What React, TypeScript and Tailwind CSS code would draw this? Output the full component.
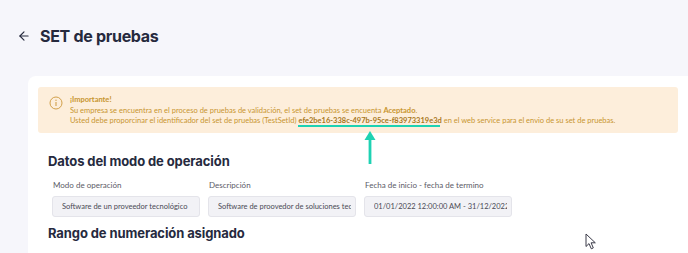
import { ArrowLeft } from "lucide-react";

const heading = "font-['Inter',sans-serif]";
const body = "font-['Lato',sans-serif]";

function Field({ label, value }: { label: string; value: string }) {
  return (
    <label className="flex flex-col gap-[6px] w-[148px]">
      <span className={`${body} text-[8px] leading-[10px] text-[#5b5b66] pl-px`}>{label}</span>
      <input
        readOnly
        value={value}
        className={`${body} h-[21px] w-full pl-[9px] pr-[4px] bg-[#f2f2f6] border border-[#e4e4ea] rounded-[3px] text-[7.5px] text-[#4a4a55] outline-none`}
      />
    </label>
  );
}

export default function App() {
  return (
    <div className="relative w-[688px] h-[253px] overflow-hidden bg-[#f6f6fb]">
      {/* header */}
      <div className="flex items-start gap-[9px] pl-[17px] pt-[26px] h-[76px]">
        <ArrowLeft size={14} strokeWidth={2} className="text-[#262a3e] mt-[3px]" />
        <h1 className={`${heading} text-[16px] leading-[20px] font-bold tracking-[-0.3px] text-[#262a3e]`}>
          SET de pruebas
        </h1>
      </div>

      {/* card */}
      <div className="ml-[28px] bg-white rounded-tl-[8px] pt-[11px] pl-[10px] pr-[10px] h-[200px]">
        <div className="flex gap-[7px] bg-[#fdeedb] rounded-[3px] h-[46px] pl-[11px] pt-[8px]">
          <svg width="14" height="14" viewBox="0 0 14 14" className="mt-[1px] shrink-0">
            <circle cx="7" cy="7" r="6" fill="none" stroke="#d2a04a" strokeWidth="1" />
            <line x1="7" y1="6" x2="7" y2="10" stroke="#d2a04a" strokeWidth="1.1" />
            <circle cx="7" cy="4.2" r="0.7" fill="#d2a04a" />
          </svg>
          <div className={`${body} text-[7.5px] leading-[10.5px] text-[#c8952f]`}>
            <div className="font-bold">¡Importante!</div>
            <div>
              Su empresa se encuentra en el proceso de pruebas de validación, el set de pruebas se encuenta{" "}
              <span className="font-bold">Aceptado</span>.
            </div>
            <div>
              Usted debe proporcinar el identificador del set de pruebas (TestSetId){" "}
              <span className="font-bold text-[#a8761a]">efe2be16-338c-497b-95ce-f83973319e3d</span> en el web
              service para el envio de su set de pruebas.
            </div>
          </div>
        </div>

        <h2 className={`${heading} mt-[20px] ml-[10px] text-[13px] leading-[16px] font-bold tracking-[-0.1px] text-[#262a3e]`}>
          Datos del modo de operación
        </h2>
        <div className="flex gap-[8px] ml-[14px] mt-[11px]">
          <Field label="Modo de operación" value="Software de un proveedor tecnológico" />
          <Field label="Descripción" value="Software de proovedor de soluciones tecnológicas" />
          <Field label="Fecha de inicio - fecha de termino" value="01/01/2022 12:00:00 AM - 31/12/2022 11:59:59 PM" />
        </div>
        <h2 className={`${heading} mt-[8px] ml-[10px] text-[13px] leading-[16px] font-bold tracking-[-0.1px] text-[#262a3e]`}>
          Rango de numeración asignado
        </h2>
      </div>

      {/* teal annotation */}
      <div className="absolute left-[298px] top-[125px] w-[142px] h-[2px] bg-[#1ed2b3]" />
      <svg className="absolute left-[364px] top-[131px]" width="12" height="33" viewBox="0 0 12 33">
        <polygon points="6,0 11.5,9 0.5,9" fill="#1ed2b3" />
        <rect x="4.6" y="8" width="2.8" height="25" fill="#1ed2b3" />
      </svg>

      {/* mouse cursor */}
      <svg className="absolute left-[585px] top-[233px]" width="13" height="18" viewBox="0 0 13 18">
        <path d="M1 1 L1 13.5 L4 10.6 L6.3 15.8 L8.3 14.9 L6.1 9.8 L10.3 9.8 Z" fill="white" stroke="#3a3a48" strokeWidth="1" strokeLinejoin="round" />
      </svg>
    </div>
  );
}
